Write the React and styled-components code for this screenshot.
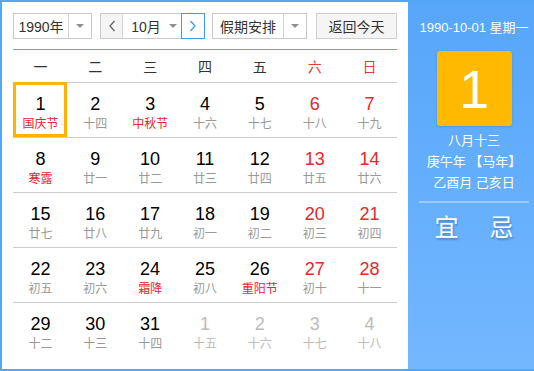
import React from 'react';
import styled, { createGlobalStyle } from 'styled-components';

const GlobalStyle = createGlobalStyle`
  html, body {
    margin: 0;
    padding: 0;
    background: #fff;
  }
  body {
    font-family: "Liberation Sans", "Noto Sans CJK SC", sans-serif;
  }
`;

const Frame = styled.div`
  width: 534px;
  height: 371px;
  box-sizing: border-box;
  border: 2px solid #56a6f8;
  border-right: none;
  display: flex;
`;

const Main = styled.div`
  width: 406px;
  box-sizing: border-box;
  padding: 11px 0 0 11px;
  background: #fff;
`;

const Toolbar = styled.div`
  display: flex;
  height: 26px;
  width: 384px;
  padding-bottom: 10px;
  border-bottom: 1px solid #56a6f8;
`;

const Select = styled.div`
  display: flex;
  box-sizing: border-box;
  width: ${(p) => p.w}px;
  height: 26px;
  margin-right: ${(p) => p.gap || 0}px;
  border: 1px solid #c9c9c9;
  background: #fff;
  font-size: 14px;
  color: #333;
`;

const SelectLabel = styled.div`
  flex: 1;
  display: flex;
  align-items: center;
  justify-content: center;
  border-right: 1px solid #d4d4d4;
`;

const Caret = styled.div`
  width: 22px;
  display: flex;
  align-items: center;
  justify-content: center;

  &::after {
    content: '';
    border-left: 4px solid transparent;
    border-right: 4px solid transparent;
    border-top: 4px solid #8f8f8f;
  }
`;

const MonthGroup = styled.div`
  display: flex;
  box-sizing: border-box;
  width: 105px;
  height: 26px;
  margin-right: 7px;
  border: 1px solid #c9c9c9;
  font-size: 14px;
  color: #333;
`;

const NavButton = styled.div`
  display: flex;
  align-items: center;
  justify-content: center;
  box-sizing: border-box;
  background: ${(p) => (p.active ? '#fff' : '#f4f4f4')};
  border: 1px solid ${(p) => (p.active ? '#3d9bf5' : 'transparent')};
  margin: ${(p) => (p.active ? '-1px -1px -1px 0' : '0')};
  border-right: ${(p) => (p.active ? '' : '1px solid #d4d4d4')};
  color: ${(p) => (p.active ? '#3d9bf5' : '#666')};
  height: ${(p) => (p.active ? '26px' : 'auto')};
  width: ${(p) => (p.active ? '24px' : '22px')};
`;

const MonthLabel = styled.div`
  flex: 1;
  display: flex;
  align-items: center;
  justify-content: center;
  gap: 8px;
  padding-left: 4px;

  &::after {
    content: '';
    border-left: 4px solid transparent;
    border-right: 4px solid transparent;
    border-top: 4px solid #8f8f8f;
  }
`;

const TodayButton = styled.div`
  box-sizing: border-box;
  width: 81px;
  height: 26px;
  display: flex;
  align-items: center;
  justify-content: center;
  border: 1px solid #cfcfcf;
  background: #f5f5f5;
  font-size: 14px;
  color: #333;
`;

const Grid = styled.div`
  width: 384px;
  display: grid;
  grid-template-columns: repeat(7, 1fr);
`;

const WeekHead = styled.div`
  height: 32px;
  display: flex;
  align-items: center;
  justify-content: center;
  border-bottom: 1px solid #cccccc;
  font-size: 14px;
  color: ${(p) => (p.weekend ? '#e63b3b' : '#333')};
`;

const Cell = styled.div`
  height: 54px;
  position: relative;
  display: flex;
  flex-direction: column;
  align-items: center;
  border-bottom: ${(p) => (p.last ? 'none' : '1px solid #cccccc')};
`;

const Highlight = styled.div`
  position: absolute;
  left: 0;
  top: -1px;
  width: 54px;
  height: 55px;
  box-sizing: border-box;
  border: 3px solid #ffb400;
`;

const DayNum = styled.div`
  margin-top: 11px;
  font-size: 18px;
  line-height: 20px;
  color: ${(p) => p.color};
`;

const Lunar = styled.div`
  margin-top: 2px;
  font-size: 12px;
  line-height: 16px;
  color: ${(p) => p.color};
`;

const Side = styled.div`
  flex: 1;
  padding-left: 6px;
  background: linear-gradient(#56a6fa, #73b7ff);
  display: flex;
  flex-direction: column;
  align-items: center;
  color: #fff;
`;

const SideDate = styled.div`
  margin-top: 18px;
  font-size: 13px;
  line-height: 16px;
`;

const DayBox = styled.div`
  margin-top: 15px;
  width: 75px;
  height: 75px;
  border-radius: 3px;
  background: #ffba00;
  box-shadow: 0 1px 3px rgba(0, 0, 0, 0.12);
  display: flex;
  align-items: center;
  justify-content: center;
  font-size: 54px;
  line-height: 1;
  color: #fff;
`;

const LunarInfo = styled.div`
  margin-top: 4px;
  font-size: 13px;
  line-height: 21px;
  text-align: center;
`;

const Divider = styled.div`
  margin-top: 8px;
  width: 110px;
  height: 2px;
  background: rgba(255, 255, 255, 0.35);
`;

const Tags = styled.div`
  margin-top: 10px;
  display: flex;
  gap: 31px;
  font-size: 24px;
  line-height: 30px;
  text-shadow: 1px 2px 2px rgba(0, 0, 0, 0.25);
`;

const weekdays = ['一', '二', '三', '四', '五', '六', '日'];

const lunar = [
  '国庆节', '十四', '中秋节', '十六', '十七', '十八', '十九',
  '寒露', '廿一', '廿二', '廿三', '廿四', '廿五', '廿六',
  '廿七', '廿八', '廿九', '初一', '初二', '初三', '初四',
  '初五', '初六', '霜降', '初八', '重阳节', '初十', '十一',
  '十二', '十三', '十四', '十五', '十六', '十七', '十八',
];

const festivals = ['国庆节', '中秋节', '寒露', '霜降', '重阳节'];

const days = lunar.map((text, i) => {
  const other = i >= 31;
  return {
    num: other ? i - 30 : i + 1,
    text,
    other,
    weekend: i % 7 >= 5,
    festival: festivals.includes(text),
    last: i >= 28,
  };
});

export default function App() {
  return (
    <>
      <GlobalStyle />
      <Frame>
        <Main>
          <Toolbar>
            <Select w={79} gap={8}>
              <SelectLabel>1990年</SelectLabel>
              <Caret />
            </Select>
            <MonthGroup>
              <NavButton>
                <svg width="8" height="12" viewBox="0 0 8 12">
                  <path d="M6.5 1L2 6l4.5 5" fill="none" stroke="currentColor" strokeWidth="1.3" />
                </svg>
              </NavButton>
              <MonthLabel>10月</MonthLabel>
              <NavButton active>
                <svg width="8" height="12" viewBox="0 0 8 12">
                  <path d="M1.5 1L6 6l-4.5 5" fill="none" stroke="currentColor" strokeWidth="1.3" />
                </svg>
              </NavButton>
            </MonthGroup>
            <Select w={95} gap={9}>
              <SelectLabel>假期安排</SelectLabel>
              <Caret />
            </Select>
            <TodayButton>返回今天</TodayButton>
          </Toolbar>
          <Grid>
            {weekdays.map((w, i) => (
              <WeekHead key={w} weekend={i >= 5}>{w}</WeekHead>
            ))}
            {days.map((d, i) => (
              <Cell key={i} last={d.last}>
                {i === 0 && <Highlight />}
                <DayNum color={d.other ? '#bbbbbb' : d.weekend ? '#e8262b' : '#000'}>{d.num}</DayNum>
                <Lunar color={d.other ? '#bbbbbb' : d.festival ? '#e8262b' : '#999'}>{d.text}</Lunar>
              </Cell>
            ))}
          </Grid>
        </Main>
        <Side>
          <SideDate>1990-10-01 星期一</SideDate>
          <DayBox>1</DayBox>
          <LunarInfo>
            八月十三<br />
            庚午年 【马年】<br />
            乙酉月 己亥日
          </LunarInfo>
          <Divider />
          <Tags>
            <span>宜</span>
            <span>忌</span>
          </Tags>
        </Side>
      </Frame>
    </>
  );
}
